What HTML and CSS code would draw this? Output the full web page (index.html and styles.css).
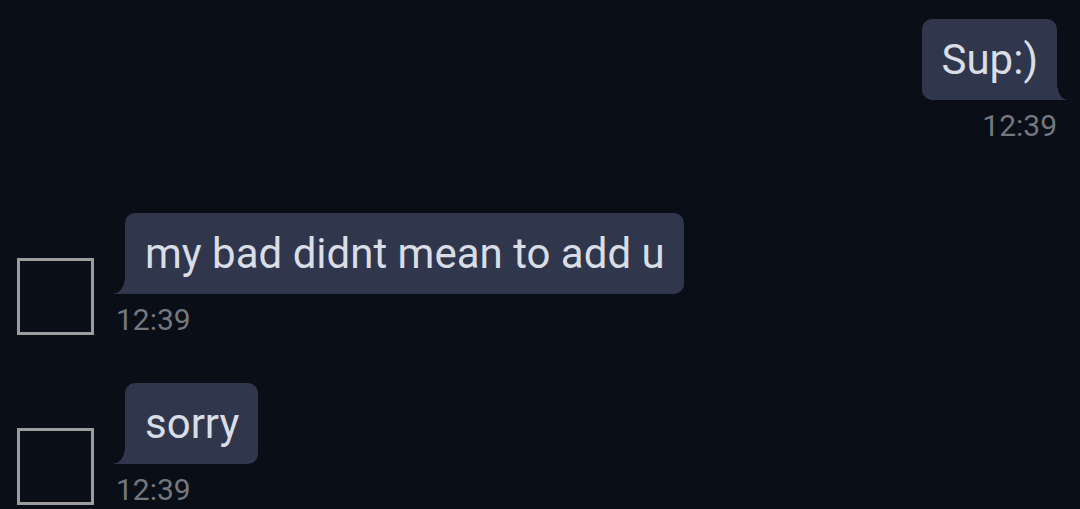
FILE: index.html
```html
<!DOCTYPE html>
<html lang="en">
<head>
    <meta charset="UTF-8">
    <title>Chat</title>
    <link rel="stylesheet" href="styles.css">
</head>
<body>
    <div class="chat">
        <!-- enviada -->
        <div class="msg mine">
            <div class="bubble">Sup:)</div>
            <div class="time">12:39</div>
        </div>

        <!-- recebidas -->
        <div class="row first">
            <div class="avatar"></div>
            <div class="msg theirs">
                <div class="bubble">my bad didnt mean to add u</div>
                <div class="time">12:39</div>
            </div>
        </div>

        <div class="row">
            <div class="avatar"></div>
            <div class="msg theirs">
                <div class="bubble">sorry</div>
                <div class="time">12:39</div>
            </div>
        </div>
    </div>
</body>
</html>
```

FILE: styles.css
```css
body {
    margin: 0;
    background: #0a0e17;
    font-family: Roboto, 'Noto Sans', sans-serif;
    height: 509px;
    overflow: hidden;
}

.chat {
    display: flex;
    flex-direction: column;
    padding: 19px 23px 0 17px;
}

.msg {
    display: flex;
    flex-direction: column;
}

.mine {
    align-items: flex-end;
}

.theirs {
    align-items: flex-start;
}

.bubble {
    position: relative;
    background: #30374c;
    color: #d9dde6;
    font-size: 42px;
    height: 81px;
    line-height: 81px;
    padding: 0 19px 0 20px;
    border-radius: 10px;
    white-space: nowrap;
}

.mine .bubble {
    border-bottom-right-radius: 0;
}

.theirs .bubble {
    margin-left: 9px;
    border-bottom-left-radius: 0;
}

/* rabinho do balão */
.bubble::before {
    content: "";
    position: absolute;
    bottom: 0;
    width: 12px;
    height: 16px;
}

.theirs .bubble::before {
    left: -12px;
    background: radial-gradient(ellipse 12px 16px at 0 0, transparent 96%, #30374c 100%);
}

.mine .bubble::before {
    right: -10px;
    width: 10px;
    background: radial-gradient(ellipse 10px 16px at 100% 0, transparent 96%, #30374c 100%);
}

.time {
    margin-top: 8px;
    font-size: 30px;
    line-height: 36px;
    color: #74787e;
}

.row {
    display: flex;
    align-items: flex-end;
    gap: 22px;
    margin-top: 45px;
}

.row.first {
    margin-top: 69px;
}

.avatar {
    width: 71px;
    height: 71px;
    border: 3px solid #9c9c9c;
    margin-bottom: 3px;
    flex-shrink: 0;
}
```
